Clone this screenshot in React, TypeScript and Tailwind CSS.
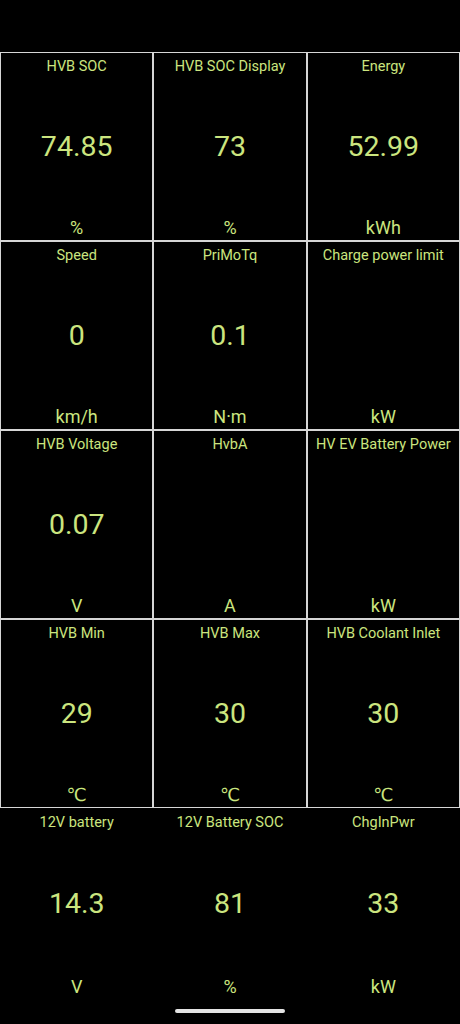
type Gauge = {
  label: string;
  value?: string;
  unit: string;
};

const rows: Gauge[][] = [
  [
    { label: "HVB SOC", value: "74.85", unit: "%" },
    { label: "HVB SOC Display", value: "73", unit: "%" },
    { label: "Energy", value: "52.99", unit: "kWh" },
  ],
  [
    { label: "Speed", value: "0", unit: "km/h" },
    { label: "PriMoTq", value: "0.1", unit: "N·m" },
    { label: "Charge power limit", unit: "kW" },
  ],
  [
    { label: "HVB Voltage", value: "0.07", unit: "V" },
    { label: "HvbA", unit: "A" },
    { label: "HV EV Battery Power", unit: "kW" },
  ],
  [
    { label: "HVB Min", value: "29", unit: "℃" },
    { label: "HVB Max", value: "30", unit: "℃" },
    { label: "HVB Coolant Inlet", value: "30", unit: "℃" },
  ],
  [
    { label: "12V battery", value: "14.3", unit: "V" },
    { label: "12V Battery SOC", value: "81", unit: "%" },
    { label: "ChgInPwr", value: "33", unit: "kW" },
  ],
];

const GaugeCell = ({ g, last }: { g: Gauge; last: boolean }) => {
  return (
    <div
      className={
        last
          ? "flex flex-col h-[192px] border border-transparent"
          : "flex flex-col h-[189px] border border-[#d6d6d6]"
      }
    >
      <div className="h-[26px] pt-[2px] flex items-center justify-center text-[14.5px] whitespace-nowrap">
        {g.label}
      </div>
      <div className="flex-1 pt-[1px] flex items-center justify-center text-[28.5px] leading-none">
        {g.value}
      </div>
      <div className="h-[26px] pt-[1px] flex items-center justify-center text-[18px]">
        {g.unit}
      </div>
    </div>
  );
};

export default function App() {
  return (
    <div
      className="relative w-[460px] h-[1024px] overflow-hidden bg-black pt-[52px] text-[#cbe57f]"
      style={{ fontFamily: "Roboto, 'DejaVu Sans', sans-serif" }}
    >
      <div className="grid grid-cols-3">
        {rows.map((row, i) =>
          row.map((g) => (
            <GaugeCell key={g.label} g={g} last={i === rows.length - 1} />
          ))
        )}
      </div>
      <div className="absolute left-[175px] bottom-[11px] w-[110px] h-[4px] rounded-full bg-[#e4e4e4]" />
    </div>
  );
}
